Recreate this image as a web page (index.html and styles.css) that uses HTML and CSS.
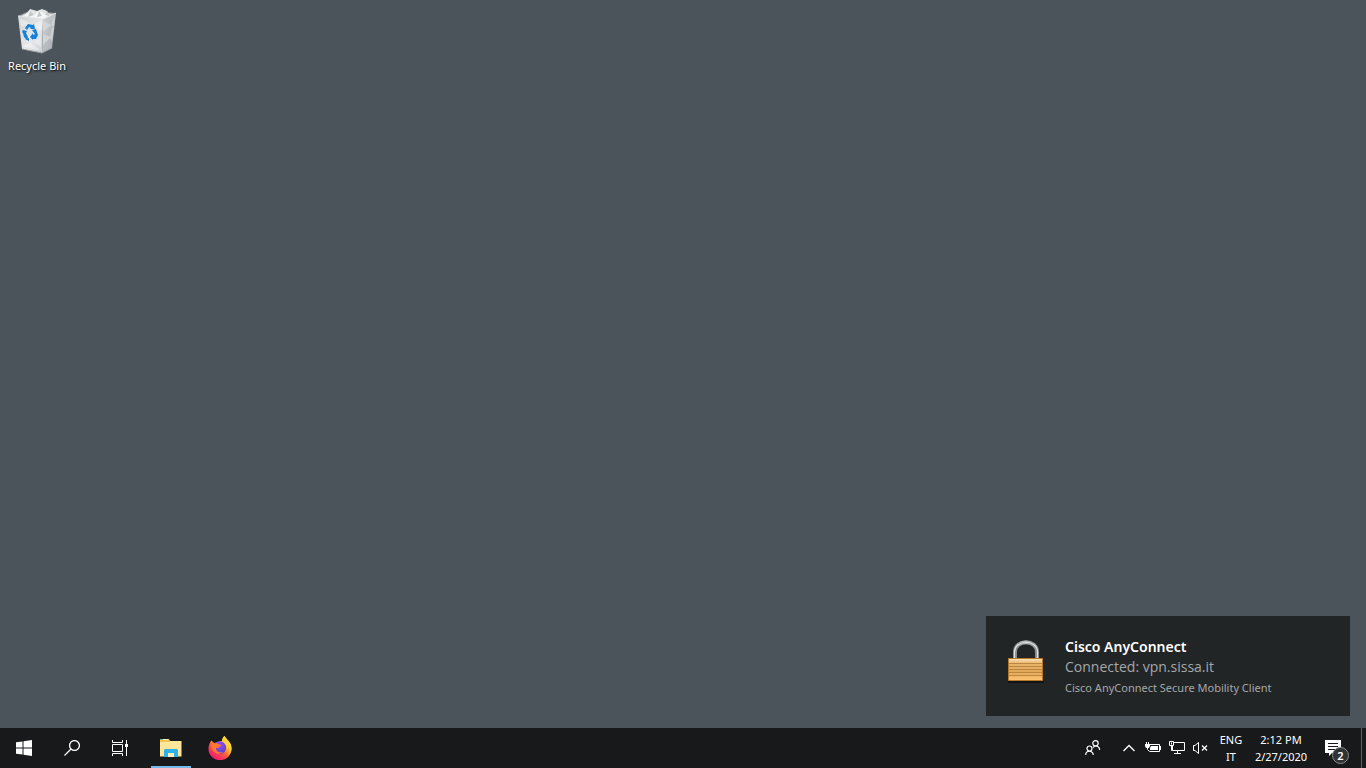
FILE: index.html
```html
<!DOCTYPE html>
<html lang="en">
<head>
<meta charset="utf-8">
<title>Desktop</title>
<link rel="stylesheet" href="styles.css">
</head>
<body>
<main class="desktop">
  <button class="shortcut" type="button">
    <svg class="bin" width="48" height="48" viewBox="0 0 48 48" aria-hidden="true">
      <defs>
        <linearGradient id="binFront" x1="0" y1="0" x2="1" y2="1"><stop offset="0" stop-color="#cfd3d5"/><stop offset=".6" stop-color="#e6e8e9"/><stop offset="1" stop-color="#c9cccf"/></linearGradient>
        <linearGradient id="binSide" x1="0" y1="0" x2="1" y2="1"><stop offset="0" stop-color="#d0d3d5"/><stop offset="1" stop-color="#a4a9ad"/></linearGradient>
      </defs>
      <path d="M5 10 16 5l27 2-14 5z" fill="#9da3a7"/>
      <path d="m8 10 6-3 3-4 7 2 5-2 5 2 1 2 6 2-8 4-14 2z" fill="#e0e3e4"/>
      <path d="m11 10 6-5 4 4 5-4 6 3 3 2-7 4z" fill="#f6f7f7"/>
      <path d="m17 5 4 4-6 2zM26 5l-2 6 5-1zM34 5l-2 4 5 1z" fill="#c3c8cb"/>
      <path d="m5 10 25 3-1 34-20-4z" fill="url(#binFront)"/>
      <path d="m30 13 13-6-4 35-10 5z" fill="url(#binSide)"/>
      <path d="m30 15 8 4-8 7zM42 9l-4 10 3 2zM30 28l8 3-8 8zM39 22l2-1-2 14-2-3z" fill="#e6e8e9" opacity=".5"/>
      <path d="m6 12 11 5-8 4zM29 14l-9 5 9 6zM9 40l9-3 10 8zM28 31l-7 5 7 5z" fill="#fff" opacity=".35"/>
      <path d="m5 10 25 3 13-6" fill="none" stroke="#e4e6e7"/>
      <path d="m9 43 20 4 10-5" fill="none" stroke="#999fa3"/>
      <g fill="#1681d8">
        <path d="m12 22 3-4 5 1 1-1 1 5-5 0 1-1-2-1-2 3z"/>
        <path d="m10 24 4 1-1 2 2 4-1 3-3-3-1-4-1-1z"/>
        <path d="m19 24 4-1 2 6-2 4h-3v1l-3-3 3-4v2l2-1z"/>
        <path d="m12 33 4-1v3z"/>
      </g>
    </svg>
    <span class="shortcut-name">Recycle Bin</span>
  </button>

  <section class="toast" aria-label="Notification">
    <svg class="toast-icon" width="48" height="52" viewBox="0 0 48 52" aria-hidden="true">
      <defs>
        <linearGradient id="brass" x1="0" y1="0" x2="0" y2="1"><stop offset="0" stop-color="#fbe5bd"/><stop offset=".22" stop-color="#e8b66c"/><stop offset=".6" stop-color="#e0a857"/><stop offset="1" stop-color="#ffc371"/></linearGradient>
        <linearGradient id="steel" x1="0" y1="0" x2="1" y2="0"><stop offset="0" stop-color="#85888a"/><stop offset=".5" stop-color="#b7babb"/><stop offset="1" stop-color="#85888a"/></linearGradient>
      </defs>
      <path d="M6 44h36v2H6z" fill="#121415"/>
      <path d="M13 22v-7c0-13 22-13 22 0v7" fill="none" stroke="url(#steel)" stroke-width="4"/>
      <path d="M12.500 22v-7c0-13 23-13 23 0v7" fill="none" stroke="#e0e2e3" stroke-width="1.200"/>
      <path d="M6.500 21.500h34v22h-34z" fill="url(#brass)" stroke="#b5782a"/>
      <path d="M7 26.500h33M7 29.500h33M7 32.500h33M7 35.500h33M7 38.500h33" stroke="#bd8640"/>
    </svg>
    <div class="toast-text">
      <h1 class="toast-title">Cisco AnyConnect</h1>
      <p class="toast-message">Connected: vpn.sissa.it</p>
      <p class="toast-source">Cisco AnyConnect Secure Mobility Client</p>
    </div>
  </section>
</main>

<footer class="taskbar">
  <nav class="apps" aria-label="Taskbar">
    <button class="app" type="button" aria-label="Start">
      <svg width="16" height="16" viewBox="0 0 16 16" fill="#fff"><path d="M0 2.300 6.500 1.400V7.500H0zM7.500 1.200 16 0v7.500H7.500zM0 8.500h6.500v6.100L0 13.700zM7.500 8.500H16V16l-8.500-1.200z"/></svg>
    </button>
    <button class="app" type="button" aria-label="Search">
      <svg width="16" height="16" viewBox="0 0 16 16" fill="none" stroke="#fff" stroke-width="1.300"><circle cx="10.500" cy="5.500" r="4.900"/><path d="M7 9 .5 15.500"/></svg>
    </button>
    <button class="app" type="button" aria-label="Task View">
      <svg width="16" height="16" viewBox="0 0 16 16" fill="none" stroke="#fff"><path d="M.5 4.500h10v7H.5zM.5 0v2.500h10V0M.5 16v-2.500h10V16M14.500 0v16"/><path d="M13 4h3v3h-3z" fill="#fff" stroke="none"/></svg>
    </button>
    <button class="app app-open" type="button" aria-label="File Explorer">
      <svg width="24" height="24" viewBox="0 0 24 24"><path d="M1 3.500 2 3h8l1 2h11v15H1z" fill="#f4c64d"/><path d="M4 3h5v1H4z" fill="#fff1b3"/><path d="M2 3h2v1H2z" fill="#55b6df"/><path d="M1 6h9l1-1h11.500v15.500H1z" fill="#ffe69b"/><path d="M5 21v-7l1-1h12l1 1v7h-4v-4H9v4z" fill="#2fb2ea"/><path d="M9 17h6v4H9z" fill="#fff0b9"/></svg>
    </button>
    <button class="app" type="button" aria-label="Firefox">
      <svg width="24" height="24" viewBox="0 0 24 24">
        <defs>
          <linearGradient id="fire" x1=".85" y1=".05" x2=".2" y2=".95"><stop offset="0" stop-color="#fff04e"/><stop offset=".35" stop-color="#ffb52c"/><stop offset=".6" stop-color="#ff5841"/><stop offset="1" stop-color="#ef1378"/></linearGradient>
          <radialGradient id="globe" cx=".5" cy=".3" r=".7"><stop offset="0" stop-color="#984df3"/><stop offset="1" stop-color="#5840c9"/></radialGradient>
        </defs>
        <path d="M3.500 4.500 6 7l3-.5C11 5 13 5 14 5c0-2 1-4 2.500-5 1 4 7 6 7 13a11.500 11.200 0 0 1-23 0c0-4 1-6 3-8.500z" fill="url(#fire)"/>
        <path d="M7 7c4-3 9-2 11 3 1 4-2 8-6 8s-6-3-6-6z" fill="url(#globe)"/>
        <path d="M3.500 5 6 7.500 9 7l2 1.500 2.500.5L10 12H8c0 4 4 5 7 4-3 3-9 2-11-3-1-3-1-5-.5-8z" fill="#ff7a30"/>
        <path d="M14.500 5c3 2 5 5 4 9 2-1 2-3 2-4 2 4 1 7-1 9 5-3 5-9 2-13l-5-6c-2 1-2 3-2 5z" fill="#ffd43a"/>
      </svg>
    </button>
  </nav>

  <div class="tray">
    <button class="people" type="button" aria-label="People">
      <svg width="16" height="16" viewBox="0 0 16 16" fill="none" stroke="#fff" stroke-width="1.200"><circle cx="10.500" cy="3.300" r="2.700"/><circle cx="4.500" cy="8.500" r="2.500"/><path d="M.7 15c0-5 7.600-5 7.600 0M8 7.500c3-3 6.500-1 6.700 2.500"/></svg>
    </button>
    <button class="status" type="button" aria-label="Show hidden icons">
      <svg width="16" height="16" viewBox="0 0 16 16" fill="none" stroke="#fff" stroke-width="1.300"><path d="m2.500 11 5.500-5.500 5.500 5.500"/></svg>
    </button>
    <button class="status" type="button" aria-label="Battery">
      <svg width="16" height="16" viewBox="0 0 16 16" fill="none" stroke="#fff"><path d="M5 4.500h9.500v7h-9M15.500 6v4M1.500 2v2M3.500 2v2M2.500 7v2.500l2 2H6"/><path d="M0 4h5v2L4 8H1L0 6zM6 6h7v4H5V8z" fill="#fff" stroke="none"/></svg>
    </button>
    <button class="status" type="button" aria-label="Network">
      <svg width="16" height="16" viewBox="0 0 16 16" fill="none" stroke="#fff"><path d="M5 2.500h10.500v8h-12V6M8.500 11v3M5 13.500h7"/><path d="M.5 1.500h4v4h-4zM2.500 2.500v2M2.500 6v4.500h1"/></svg>
    </button>
    <button class="status" type="button" aria-label="Volume muted">
      <svg width="16" height="16" viewBox="0 0 16 16" fill="none" stroke="#fff"><path d="M.5 5.500H2l3.500-3v11L2 10.500H.5z"/><path d="m9 5.500 5 5M14 5.500l-5 5" stroke-width="1.300"/></svg>
    </button>
    <button class="language" type="button"><span>ENG</span><span>IT</span></button>
    <button class="clock" type="button"><span>2:12 PM</span><span>2/27/2020</span></button>
    <button class="action-center" type="button" aria-label="Notifications, 2 new">
      <svg width="16" height="16" viewBox="0 0 16 16"><path d="M0 0h16v13H7l-3 3v-3H0z" fill="#fff"/><path d="M3 3.500h10M3 6.500h10M3 9.500h7" stroke="#17191a"/></svg>
      <span class="badge">2</span>
    </button>
    <button class="show-desktop" type="button" aria-label="Show desktop"></button>
  </div>
</footer>
</body>
</html>
```
FILE: styles.css
```css
* {
  box-sizing: border-box;
}

body {
  margin: 0;
  min-height: 100vh;
  display: flex;
  flex-direction: column;
  background: #4b545a;
  color: #fff;
  font: 12px/16px "Noto Sans", "Open Sans", sans-serif;
}

button {
  margin: 0;
  padding: 0;
  border: 0;
  background: transparent;
  color: inherit;
  font: inherit;
}

svg {
  display: block;
}

.desktop {
  flex: 1;
  display: flex;
  flex-direction: column;
  justify-content: space-between;
  align-items: flex-start;
}

.shortcut {
  width: 74px;
  padding-top: 6px;
  display: flex;
  flex-direction: column;
  align-items: center;
  gap: 4px;
}

.shortcut-name {
  font-size: 11px;
  text-shadow: 1px 1px 2px #000;
}

.toast {
  align-self: flex-end;
  width: 364px;
  min-height: 100px;
  margin: 0 16px 12px;
  padding: 21px 16px 17px;
  display: flex;
  gap: 15px;
  background: #212526;
}

.toast-text {
  display: flex;
  flex-direction: column;
}

.toast-title,
.toast-message,
.toast-source {
  margin: 0;
  font-weight: 400;
  line-height: 20px;
}

.toast-title {
  font-size: 14px;
  font-weight: 600;
}

.toast-message {
  font-family: "Open Sans", "Noto Sans", sans-serif;
  font-size: 14px;
  color: #a5a7a8;
}

.toast-source {
  font-size: 11px;
  line-height: 22px;
  color: #a5a7a8;
}

.taskbar {
  height: 40px;
  display: flex;
  justify-content: space-between;
  background: #17191a;
}

.apps,
.tray {
  display: flex;
}

.app {
  width: 48px;
  display: grid;
  place-items: center;
}

.app-open {
  width: 40px;
  margin: 0 5px 0 7px;
  box-shadow: inset 0 -2px #76b9ed;
}

.people,
.status,
.action-center {
  display: grid;
  place-items: center;
}

.people {
  width: 36px;
  margin-right: 6px;
}

.status {
  width: 24px;
}

.language,
.clock {
  display: flex;
  flex-direction: column;
  align-items: center;
  justify-content: center;
  font-size: 11px;
  line-height: 17px;
}

.language {
  width: 36px;
}

.clock {
  width: 64px;
}

.action-center {
  width: 48px;
  padding-right: 8px;
  position: relative;
}

.badge {
  position: absolute;
  right: 12px;
  bottom: 4px;
  width: 17px;
  height: 17px;
  border: 1px solid #898c8d;
  border-radius: 50%;
  background: #303334;
  font-size: 11px;
  font-weight: 600;
  line-height: 15px;
  text-align: center;
}

.show-desktop {
  width: 5px;
  border-left: 1px solid #606364;
}
```
